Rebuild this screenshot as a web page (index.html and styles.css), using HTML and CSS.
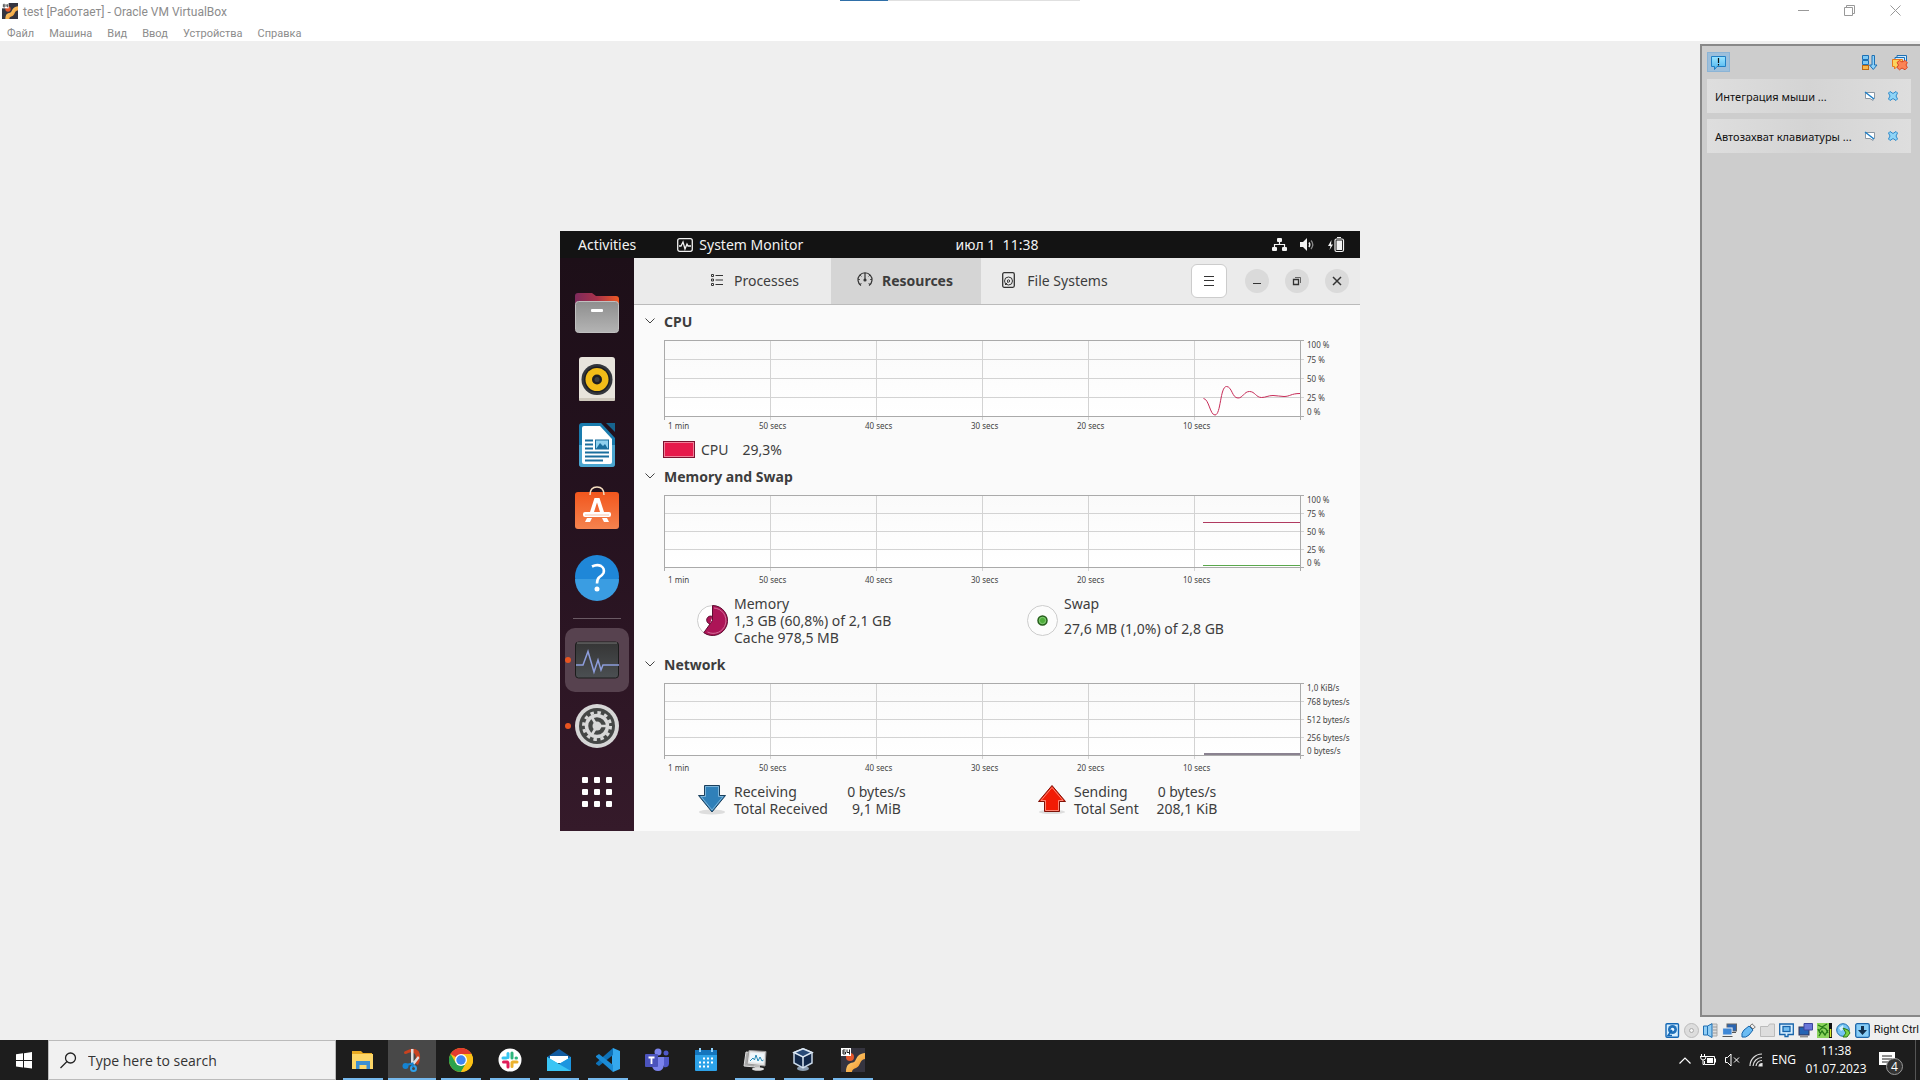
FILE: index.html
```html
<!DOCTYPE html>
<html lang="ru">
<head>
<meta charset="utf-8">
<title>test [Работает] - Oracle VM VirtualBox</title>
<link rel="stylesheet" href="styles.css">
</head>
<body>
<svg class="defs" aria-hidden="true">
  <defs>
    <linearGradient id="gBlue" x1="0" y1="0" x2="0" y2="1"><stop offset="0" stop-color="#9be4ff"/><stop offset="1" stop-color="#4db4ee"/></linearGradient>
    <linearGradient id="gFolder" x1="0" y1="0" x2="0" y2="1"><stop offset="0" stop-color="#8e8e8e"/><stop offset="1" stop-color="#b4b4b4"/></linearGradient>
    <linearGradient id="gTab" x1="0" y1="0" x2="1" y2="0"><stop offset="0" stop-color="#7d2a5c"/><stop offset=".5" stop-color="#a8324a"/><stop offset="1" stop-color="#ef5a24"/></linearGradient>
    <linearGradient id="gShop" x1="0" y1="0" x2="0" y2="1"><stop offset="0" stop-color="#f2561d"/><stop offset="1" stop-color="#f5834f"/></linearGradient>
    <linearGradient id="gMon" x1="0" y1="0" x2="0" y2="1"><stop offset="0" stop-color="#353535"/><stop offset="1" stop-color="#4b4f52"/></linearGradient>
    <linearGradient id="gPlot" x1="0" y1="0" x2="0" y2="1"><stop offset="0" stop-color="#fafafa"/><stop offset="1" stop-color="#ffffff"/></linearGradient>
    <linearGradient id="gGuest" x1="0" y1="0" x2="1" y2="1"><stop offset="0" stop-color="#ffe08a"/><stop offset="1" stop-color="#f08a1c"/></linearGradient>
    <symbol id="guest" viewBox="0 0 24 24">
      <rect width="24" height="24" fill="#35343f"/>
      <path d="M5 24C5 17 8 15 12 14.500C16 14 14 6 24 5V11C18 12 20 18 15 20C12 21 11 22 11 24Z" fill="url(#gGuest)"/>
      <circle cx="9" cy="9" r="4" fill="#e4562b"/>
      <rect width="10" height="8" fill="#fff"/>
      <path d="M4.500 2H2V6H4.500V4H2M6 1.500V4.500H9M8.500 1.500V6.500" fill="none" stroke="#222"/>
    </symbol>
    <symbol id="bubble-off" viewBox="0 0 12 12"><path d="M1.500 2.500H10.500V8.500H9V10.500L6 8.500H1.500Z" fill="#fff" stroke="#8b97a3"/><path d="M1 2L10 9" stroke="#1f80c8" stroke-width="1.500"/></symbol>
    <symbol id="cross" viewBox="0 0 12 12"><path d="M3 1.500L6 3.500L9 1.500L10.500 3L9 6L10.500 9L9 10.500L6 8.500L3 10.500L1.500 9L3 6L1.500 3Z" fill="#8ed4f7" stroke="#2f8aca"/></symbol>
  </defs>
</svg>

<header class="titlebar">
  <span class="load"></span>
  <svg class="app-icon"><use href="#guest"/></svg>
  <h1 class="title">test [Работает] - Oracle VM VirtualBox</h1>
  <div class="win-controls">
    <button aria-label="Свернуть"><svg width="11" height="11"><path d="M0 5.500H11" stroke="#999"/></svg></button>
    <button aria-label="Восстановить"><svg width="11" height="11" fill="none" stroke="#999"><path d="M.5 2.500H8.500V10.500H.5ZM2.500 2V.5H10.500V8.500H9"/></svg></button>
    <button aria-label="Закрыть"><svg width="11" height="11"><path d="M.5 .5L10.500 10.500M10.500 .5L.5 10.500" stroke="#999"/></svg></button>
  </div>
</header>
<nav class="menubar">
  <a href="#">Файл</a><a href="#">Машина</a><a href="#">Вид</a><a href="#">Ввод</a><a href="#">Устройства</a><a href="#">Справка</a>
</nav>

<main class="stage">
  <section class="guest" aria-label="Guest display">
    <div class="topbar">
      <span class="activities">Activities</span>
      <span class="focused"><svg width="16" height="14" fill="none" stroke="#f2f2f2" stroke-width="1.300"><rect x=".7" y=".7" width="14.600" height="12.600" rx="2"/><path d="M2 8H4L6 4L8 11L10 6L11 8H14"/></svg>System Monitor</span>
      <time class="clock">июл 1&nbsp; 11:38</time>
      <span class="indicators">
        <svg width="16" height="14" fill="#f2f2f2"><rect x="5" y="0" width="5" height="4" rx="1"/><rect x="0" y="9" width="5" height="4" rx="1"/><rect x="10" y="9" width="5" height="4" rx="1"/><path d="M2.500 9V6.500H12.500V9M7.500 4V6.500" fill="none" stroke="#f2f2f2" stroke-width="1.200"/></svg>
        <svg width="16" height="14"><path d="M0 4H3L7 0V13L3 9H0Z" fill="#f2f2f2"/><path d="M9 4.500Q10.500 6.500 9 9" fill="none" stroke="#f2f2f2" stroke-width="1.500"/><path d="M11 2.500Q14.500 6.500 11 11" fill="none" stroke="#888" stroke-width="1.300"/></svg>
        <svg width="17" height="16"><path d="M3.500 3L0 9H2.500L1.500 13L5 7.500H3Z" fill="#f2f2f2"/><path d="M9 .5H13" stroke="#f2f2f2"/><rect x="7" y="2" width="8.500" height="12.500" rx="1.500" fill="none" stroke="#f2f2f2" stroke-width="1.200"/><rect x="8.500" y="3.500" width="5.500" height="9.500" fill="#f2f2f2"/></svg>
      </span>
    </div>
    <div class="desktop">
      <nav class="dock">
        <button aria-label="Files"><svg viewBox="0 0 44 44"><path d="M0 12V5Q0 2 3 2H17L21 5H41Q44 5 44 8V14H0Z" fill="url(#gTab)"/><rect x=".5" y="10.500" width="43" height="31" rx="3" fill="url(#gFolder)" stroke="#c0c0c0"/><rect x="16" y="18" width="12" height="3" rx="1" fill="#fff"/></svg></button>
        <button aria-label="Rhythmbox"><svg viewBox="0 0 44 44"><rect x="4" y="0" width="36" height="44" rx="3" fill="#e8e4dc"/><rect x="4" y="41" width="36" height="3" rx="1" fill="#cfc9bd"/><circle cx="22" cy="22.500" r="15.500" fill="#33363c"/><circle cx="22" cy="22.500" r="13" fill="#1d1e22"/><circle cx="22" cy="22.500" r="11.500" fill="#f2bc18"/><circle cx="22" cy="22.500" r="5" fill="#1e1e20"/><circle cx="22" cy="22.500" r="2.500" fill="#3a3d42"/></svg></button>
        <button aria-label="LibreOffice Writer"><svg viewBox="0 0 44 44"><path d="M7 0H26L40 15V41Q40 44 37 44H7Q4 44 4 41V3Q4 0 7 0Z" fill="#1a7cae"/><path d="M4 22H40V41Q40 44 37 44H7Q4 44 4 41Z" fill="#4aa5cf"/><path d="M31 0H40V9Z" fill="#16638d"/><path d="M9 3H25L37 16V39Q37 41 35 41H9Q7 41 7 39V5Q7 3 9 3Z" fill="#fff"/><path d="M10 17.500H18M10 21.500H18M10 25.500H18M10 29.500H34M10 33.500H34M10 37.500H28" stroke="#1a6e9d" stroke-width="2"/><rect x="20.500" y="17" width="13" height="9" fill="#8fd0ee" stroke="#1a6e9d"/><path d="M21 26L25 20L28 23L30 21L33 26Z" fill="#1a6e9d"/></svg></button>
        <button aria-label="Ubuntu Software"><svg viewBox="0 0 44 44"><rect y="3" width="44" height="37" rx="3" fill="url(#gShop)"/><path d="M15 6Q15 -2 22 -2T29 6" fill="none" stroke="#f6dfc0" stroke-width="1.500"/><path d="M19.500 9H24.500L29 23H25L22 13.500L19 23H15Z" fill="#fff"/><rect x="8" y="23" width="28" height="5" rx="2" fill="#fff"/><path d="M10 26H34" stroke="#f3aa85" stroke-width=".7"/><path d="M12 29H17L15 33H10ZM27 29H32L34 33H29Z" fill="#fff"/></svg></button>
        <button aria-label="Help"><svg viewBox="0 0 44 44"><circle cx="22" cy="22" r="22" fill="#1f87d8"/><path d="M0 24H44A22 22 0 0 1 0 24Z" fill="#3a9de2"/><path d="M17 11.500Q22 9 26 11Q30 13.500 28.500 18Q27.500 20 24.500 22Q22 24 22 28.500" fill="none" stroke="#fff" stroke-width="2.600"/><circle cx="22" cy="34" r="2.500" fill="#fff"/></svg></button>
        <hr>
        <button class="active running" aria-label="System Monitor"><svg viewBox="0 0 44 44"><rect x=".5" y="4" width="43" height="36" rx="3" fill="url(#gMon)" stroke="#1c1c1c"/><path d="M2 5H42" stroke="#777"/><path d="M1 27H8L13 13.500L19 34L23 22L26 32L28 27H44" fill="none" stroke="#8d9ddb" stroke-width="1.500"/></svg></button>
        <button class="running" aria-label="Settings"><svg viewBox="0 0 44 44"><circle cx="22" cy="22" r="22" fill="#d6d6d6"/><circle cx="22" cy="22" r="18" fill="#454746"/><circle cx="22" cy="22" r="13.500" fill="none" stroke="#d8d8d8" stroke-width="3" stroke-dasharray="3.500 3.568"/><circle cx="22" cy="22" r="10.500" fill="none" stroke="#d8d8d8" stroke-width="3.500"/><circle cx="22" cy="22" r="4.500" fill="#d8d8d8"/><path d="M22 22H32M22 22L17 13.500M22 22L17 30.500" stroke="#d8d8d8" stroke-width="2.500"/></svg></button>
        <button aria-label="Show Applications"><svg viewBox="0 0 44 44" fill="#fff"><g id="dots"><rect x="7" y="7" width="6" height="6" rx="1"/><rect x="19" y="7" width="6" height="6" rx="1"/><rect x="31" y="7" width="6" height="6" rx="1"/></g><use href="#dots" y="12"/><use href="#dots" y="24"/></svg></button>
      </nav>

      <div class="monitor">
        <div class="headerbar">
          <div class="tabs">
            <button class="tab"><svg width="12" height="12" fill="none" stroke="#333"><path d="M4.500 1.500H12M4.500 6H12M4.500 10.500H12"/><path d="M.5 .5H2.500V2.500H.5ZM.5 5H2.500V7H.5ZM.5 9.500H2.500V11.500H.5Z"/></svg>Processes</button>
            <button class="tab selected"><svg width="16" height="16" fill="none" stroke="#333" stroke-width="1.200"><path d="M4 13.500A7 7 0 1 1 12 13.500M8 1V8"/><circle cx="8" cy="8" r="1" fill="#333"/><path d="M1 7.500H3M13 7.500H15M3 3L4.500 4.500M13 3L11.500 4.500M3 12.500L4.500 11M13 12.500L11.500 11" stroke-width=".8"/></svg>Resources</button>
            <button class="tab"><svg width="14" height="16" fill="none" stroke="#333" stroke-width="1.300"><rect x=".7" y=".7" width="11.600" height="14.600" rx="1.500"/><circle cx="6.500" cy="9" r="4" stroke-width="1"/><circle cx="6.500" cy="9" r="1.200" stroke-width="1"/><path d="M5.500 10.500L3 13" stroke-width="1"/></svg>File Systems</button>
          </div>
          <button class="hamburger" aria-label="Menu"><svg width="10" height="10"><path d="M0 .5H10M0 4.500H10M0 9.500H10" stroke="#333"/></svg></button>
          <button class="round" aria-label="Minimize"><svg width="10" height="10"><path d="M1 7.500H9" stroke="#333"/></svg></button>
          <button class="round" aria-label="Restore"><svg width="10" height="10" fill="none" stroke="#333"><path d="M1.500 3.500H6.500V8.500H1.500Z" stroke-width="1.300"/><path d="M3 1.500H8.500V7" stroke-width=".7"/></svg></button>
          <button class="round" aria-label="Close"><svg width="10" height="10"><path d="M1 1L9 9M9 1L1 9" stroke="#333" stroke-width="1.500"/></svg></button>
        </div>

        <section class="resource">
          <h2><svg class="chevron" viewBox="0 0 10 6"><path d="M.5 .5L5 5L9.500 .5"/></svg>CPU</h2>
          <svg class="chart" viewBox="0 0 696 101" preserveAspectRatio="xMinYMin meet">
            <rect x="0" y="6" width="636" height="76" fill="url(#gPlot)"/>
            <path class="grid" d="M0 25.500H640M0 44.500H640M0 63.500H640M106.500 6V86M212.500 6V86M318.500 6V86M424.500 6V86M530.500 6V86"/>
            <path class="frame" d="M0 6.500H640M0 82.500H640M.5 6V86M636.500 6V86"/>
            <path class="line cpu" d="M539.500 64.500C545 65 546 81 551 81C557 81 556 52.500 562.500 52.500C568 52.500 568 64 574 64C579 64 580 57.500 585.500 57.500C591 57.500 592 63.500 597.500 63.500C602 63.500 604 61.500 609 61.500C613 61.500 616 62.500 620 62.500C626 62.500 627 59.500 636 59.500"/>
            <g class="ticks"><text x="4" y="95">1 min</text><text x="95" y="95">50 secs</text><text x="201" y="95">40 secs</text><text x="307" y="95">30 secs</text><text x="413" y="95">20 secs</text><text x="519" y="95">10 secs</text>
            <text x="643" y="14">100 %</text><text x="643" y="29">75 %</text><text x="643" y="48">50 %</text><text x="643" y="67">25 %</text><text x="643" y="81">0 %</text></g>
          </svg>
          <div class="legend cpu-legend"><button class="swatch" aria-label="CPU color"></button><span>CPU</span><span class="value">29,3%</span></div>
        </section>

        <section class="resource">
          <h2><svg class="chevron" viewBox="0 0 10 6"><path d="M.5 .5L5 5L9.500 .5"/></svg>Memory and Swap</h2>
          <svg class="chart" viewBox="0 0 696 101" preserveAspectRatio="xMinYMin meet">
            <rect x="0" y="6" width="636" height="72" fill="url(#gPlot)"/>
            <path class="grid" d="M0 24.500H640M0 42.500H640M0 60.500H640M106.500 6V82M212.500 6V82M318.500 6V82M424.500 6V82M530.500 6V82"/>
            <path class="frame" d="M0 6.500H640M0 78.500H640M.5 6V82M636.500 6V82"/>
            <path class="line mem" d="M539 33.500H636"/><path class="line swap" d="M539 76.500H636"/>
            <g class="ticks"><text x="4" y="94">1 min</text><text x="95" y="94">50 secs</text><text x="201" y="94">40 secs</text><text x="307" y="94">30 secs</text><text x="413" y="94">20 secs</text><text x="519" y="94">10 secs</text>
            <text x="643" y="14">100 %</text><text x="643" y="28">75 %</text><text x="643" y="46">50 %</text><text x="643" y="64">25 %</text><text x="643" y="77">0 %</text></g>
          </svg>
          <div class="legend mem-legend">
            <svg class="pie" viewBox="0 0 31 31"><circle cx="15.500" cy="15.500" r="15" fill="#fff" stroke="#ccc"/><path d="M15.500 .5A15 15 0 1 1 6.800 27.700L15.500 15.500Z" fill="#ad1457" stroke="#5f0c31"/><path d="M17 3A12.700 12.700 0 1 1 10.500 27" fill="none" stroke="#d987a9" stroke-width=".8"/><path d="M15.500 11.500A4 4 0 1 0 13 19" fill="#ad1457" stroke="#5f0c31"/></svg>
            <p>Memory<br>1,3 GB (60,8%) of 2,1 GB<br>Cache 978,5 MB</p>
            <svg class="pie" viewBox="0 0 31 31"><circle cx="15.500" cy="15.500" r="15" fill="#fcfcfc" stroke="#ccc"/><circle cx="15.500" cy="15.500" r="4.500" fill="#4fae3b" stroke="#255c1b" stroke-width="1.500"/><circle cx="15.500" cy="15.500" r="3.200" fill="none" stroke="#9bd48f" stroke-width=".7"/></svg>
            <p class="swap-text"><span>Swap</span><span>27,6 MB (1,0%) of 2,8 GB</span></p>
          </div>
        </section>

        <section class="resource">
          <h2><svg class="chevron" viewBox="0 0 10 6"><path d="M.5 .5L5 5L9.500 .5"/></svg>Network</h2>
          <svg class="chart" viewBox="0 0 696 101" preserveAspectRatio="xMinYMin meet">
            <rect x="0" y="6" width="636" height="72" fill="url(#gPlot)"/>
            <path class="grid" d="M0 24.500H640M0 42.500H640M0 60.500H640M106.500 6V82M212.500 6V82M318.500 6V82M424.500 6V82M530.500 6V82"/>
            <path class="frame" d="M0 6.500H640M0 78.500H640M.5 6V82M636.500 6V82"/>
            <path class="line net" d="M540 77H636"/>
            <g class="ticks"><text x="4" y="94">1 min</text><text x="95" y="94">50 secs</text><text x="201" y="94">40 secs</text><text x="307" y="94">30 secs</text><text x="413" y="94">20 secs</text><text x="519" y="94">10 secs</text>
            <text x="643" y="14">1,0 KiB/s</text><text x="643" y="28">768 bytes/s</text><text x="643" y="46">512 bytes/s</text><text x="643" y="64">256 bytes/s</text><text x="643" y="77">0 bytes/s</text></g>
          </svg>
          <div class="legend net-legend">
            <svg class="arrow" viewBox="0 0 28 30"><ellipse cx="14" cy="27" rx="13" ry="2.500" fill="#ddd"/><path d="M6.500 .5H21.500V10.500H27.500L14 27L.5 10.500H6.500Z" fill="#2f80b9" stroke="#1b3f5c"/><path d="M7.500 1.500H20.500V11.500H25L14 25L3 11.500H7.500Z" fill="none" stroke="#8fc0e0" stroke-width=".8"/></svg>
            <p>Receiving<br>Total Received</p><p class="amount">0 bytes/s<br>9,1 MiB</p>
            <svg class="arrow" viewBox="0 0 28 30"><ellipse cx="14" cy="27" rx="13" ry="2" fill="#ddd"/><path d="M14 .5L27.500 16.500H21.500V26.500H6.500V16.500H.5Z" fill="#f21b05" stroke="#7d1208"/><path d="M14 2.500L25 15.500H20.500V25.500H7.500V15.500H3Z" fill="none" stroke="#ff9f8f" stroke-width=".8"/></svg>
            <p>Sending<br>Total Sent</p><p class="amount">0 bytes/s<br>208,1 KiB</p>
          </div>
        </section>
      </div>
    </div>
  </section>

  <aside class="notices">
    <div class="notice-tools">
      <button class="pressed" aria-label="Уведомления"><svg width="17" height="17"><path d="M1.500 2.500H15.500V12.500H7L4.500 15.500V12.500H1.500Z" fill="url(#gBlue)" stroke="#1f7fc4"/><path d="M8.500 4V9M8.500 10V11.500" stroke="#111" stroke-width="1.200"/></svg></button>
      <button aria-label="Сортировать"><svg width="17" height="17"><path d="M1.500 1.500H7.500V5.500H1.500ZM1.500 6.500H7.500V10.500H1.500Z" fill="#7cc9f6" stroke="#1d70b4"/><rect x="1.500" y="11.500" width="6" height="4" fill="#f8b84e" stroke="#c06a12"/><path d="M11 1.500H13.500V11H16L12.250 15.500L8.500 11H11Z" fill="#8fd3fa" stroke="#1d70b4"/></svg></button>
      <button aria-label="Закрыть все"><svg width="17" height="17"><path d="M6 4V1.500H15.500V7M4 6V3.500H13.500V8" fill="#cfeaff" stroke="#1d70b4"/><path d="M1.500 5.500H11.500V12.500H6L3.500 15V12.500H1.500Z" fill="#fbd35d" stroke="#e8781a"/><path d="M8.500 6.500L11 8L14 6.500L16.300 8.500L15 11L16.300 13.500L14 15.800L11 14L8.500 15.800L6 13.500L7.500 11L6 8.500Z" fill="#fb8455" stroke="#d94521"/></svg></button>
    </div>
    <article class="notice"><span>Интеграция мыши ...</span><button aria-label="Не показывать"><svg width="12" height="12"><use href="#bubble-off"/></svg></button><button aria-label="Закрыть"><svg width="12" height="12"><use href="#cross"/></svg></button></article>
    <article class="notice"><span>Автозахват клавиатуры ...</span><button aria-label="Не показывать"><svg width="12" height="12"><use href="#bubble-off"/></svg></button><button aria-label="Закрыть"><svg width="12" height="12"><use href="#cross"/></svg></button></article>
  </aside>
</main>

<footer class="status">
  <svg viewBox="0 0 15 15"><rect x="1" y=".7" width="12.500" height="13.500" rx="1" fill="#d6efff" stroke="#1367b5" stroke-width="1.400"/><circle cx="7.500" cy="6.500" r="4.500" fill="#2272bb"/><circle cx="7.500" cy="6.500" r="1.800" fill="#e8f5ff"/><path d="M7 7L3 12.500H7" fill="none" stroke="#1367b5" stroke-width="1.500"/></svg>
  <svg viewBox="0 0 15 15"><circle cx="7.500" cy="7.500" r="7" fill="#ddd" stroke="#bbb"/><circle cx="7.500" cy="7.500" r="2" fill="#f5f5f5" stroke="#aaa"/></svg>
  <svg viewBox="0 0 15 15"><path d="M8 1H14V13H8Z" fill="#ddd" stroke="#aaa"/><path d="M10 4H14M10 7H14M10 10H14" stroke="#999"/><path d="M.5 3H4.500L9 .7V14.500L4.500 12H.5Z" fill="#8fcdf5" stroke="#1f6fb3"/><path d="M4.500 3V12" stroke="#1f6fb3"/></svg>
  <svg viewBox="0 0 15 15"><rect x="5" y="1" width="9.500" height="7" fill="#2b65b1" stroke="#666"/><rect x=".6" y="5" width="9.500" height="7" fill="#3f88d6" stroke="#eee"/><path d="M.5 13.500H10.500M10 9.500H14" stroke="#555"/></svg>
  <svg viewBox="0 0 15 15"><path d="M1 14Q0 10 3 7L8 3L12 7L8 12Q5 15 1 14Z" fill="#6bbcf3" stroke="#1864aa"/><path d="M9 3L11 .8L14.300 4L12 6Z" fill="#eee" stroke="#777"/></svg>
  <svg viewBox="0 0 15 15"><path d="M.5 13.500V3.500H8L9.500 1H14.500V13.500Z" fill="#ddd" stroke="#bbb"/></svg>
  <svg viewBox="0 0 15 15"><path d="M.7 1H14.300V11.500H9V13.500H6V11.500H.7Z" fill="#d9efff" stroke="#1864aa" stroke-width="1.300"/><rect x="4" y="3.500" width="7" height="5" fill="#74bdf0" stroke="#1864aa" stroke-width="1.300"/></svg>
  <svg viewBox="0 0 15 15"><rect x="1" y="4" width="10" height="8" fill="#2463b4" stroke="#335"/><path d="M2 13.800H10" stroke="#666"/><path d="M6 .5H14.500V7H6Z" fill="#6875d8" stroke="#3d459c"/></svg>
  <svg viewBox="0 0 15 15"><rect width="15" height="15" fill="#8bd35c"/><path d="M1 2L5 4L10 1M2 13L5 8L8 12L11 7M2 8Q5 3 9 6L11 10M1 6L3 10" stroke="#237a15" fill="none" stroke-width="1.300"/><rect x="12" y="0" width="3" height="15" fill="#111"/><path d="M13.500 6V14" stroke="#d8ed2d" stroke-width="1.500"/></svg>
  <svg viewBox="0 0 15 15"><circle cx="7" cy="7" r="6.300" fill="#76c4f3" stroke="#1b6cae"/><path d="M3 5L7 2L8 6L5 8Z" fill="#d7f1ff"/><path d="M7 5L12 7L14 10L11 14H7L10 10Z" fill="#7bd245" stroke="#2c7a16"/></svg>
  <svg viewBox="0 0 15 15"><rect x=".7" y=".7" width="13.600" height="13.600" rx="1.500" fill="#87cdf7" stroke="#1c65a9" stroke-width="1.300"/><path d="M6 3H9V7H12L7.500 12L3 7H6Z" fill="#12304e"/></svg>
  <span>Right Ctrl</span>
</footer>

<footer class="taskbar">
  <button class="start" aria-label="Start"><svg width="17" height="17" fill="#fff"><path d="M0 2.300L7 1.300V8H0ZM8 1.200L16 0V8H8ZM0 9H7V15.500L0 14.500ZM8 9H16V16.500L8 15.500Z"/></svg></button>
  <label class="search"><svg width="17" height="17" fill="none" stroke="#222" stroke-width="1.300"><circle cx="10.500" cy="6" r="5"/><path d="M7 9.500L.5 16"/></svg><input type="text" placeholder="Type here to search" aria-label="Search"></label>
  <nav class="apps">
    <button class="open" aria-label="File Explorer"><svg viewBox="0 0 24 24"><path d="M1 3H10L12 5H21V21H1Z" fill="#e9aa22"/><path d="M1 6H22V21H1Z" fill="#fdd667"/><path d="M5 21V13H19V21H15.500V17H8.500V21Z" fill="#3c8fd2"/></svg></button>
    <button class="open current" aria-label="Snip"><svg viewBox="0 0 24 24"><path d="M8 2Q14 -1 18.500 3Q22 9 18 17L14.500 15Q17 10 15 6Q12 2.500 6 6Q3 6 4.500 3.500Z" fill="#c9421f"/><path d="M11 1L13.500 1V16H11ZM13 14L18 8L19.500 10L14 17Z" fill="#dcdfe2"/><circle cx="5.500" cy="18" r="3" fill="#1583d1"/><circle cx="13.500" cy="20.500" r="2.500" fill="none" stroke="#2fa0ea" stroke-width="2"/><path d="M6 17L12.500 15.500L13 19" fill="none" stroke="#1583d1" stroke-width="2"/></svg></button>
    <button class="open" aria-label="Chrome"><svg viewBox="0 0 24 24"><circle cx="12" cy="12" r="12" fill="#fbc116"/><path d="M12 12L1.600 6A12 12 0 0 1 22.400 6Z" fill="#e33b2e"/><path d="M1.600 6A12 12 0 0 0 12 24L17.200 15L12 12L6.800 15Z" fill="#2ba24c"/><path d="M12 6H22.400A12 12 0 0 1 12 24L17.200 15Z" fill="#fbc116"/><circle cx="12" cy="12" r="6" fill="#fff"/><circle cx="12" cy="12" r="4.700" fill="#4086f4"/></svg></button>
    <button class="open" aria-label="Slack"><svg viewBox="0 0 24 24"><circle cx="12" cy="12" r="11.500" fill="#fff"/><g fill="none" stroke-width="3" stroke-linecap="round"><path d="M10 5.500V9.500M5 10H8" stroke="#36c5f0"/><path d="M14 5V10M18 10H18.500" stroke="#2eb67d"/><path d="M14 14.500V18.500M14.500 14H19" stroke="#ecb22e"/><path d="M5.500 14H9.500M10 15V19" stroke="#e01e5a"/></g></svg></button>
    <button class="open" aria-label="Mail"><svg viewBox="0 0 24 24"><path d="M0 9L12 1L24 9V12H0Z" fill="#125b9f"/><path d="M3 8H21V15H3Z" fill="#fff"/><path d="M0 9L12 16L24 9V23H0Z" fill="#33bdf2"/><path d="M0 9L24 23H0Z" fill="#3ac5f4"/><path d="M12 16L24 9V23Z" fill="#1c95df"/></svg></button>
    <button class="open" aria-label="Visual Studio Code"><svg viewBox="0 0 24 24"><path d="M17 0L24 3V21L17 24L16 20V4Z" fill="#34a8ee"/><path d="M17 0V7L3 18L0 16V15Z" fill="#0e72b8"/><path d="M17 24V17L3 6L0 8V9Z" fill="#1b8bd5"/></svg></button>
    <button aria-label="Teams"><svg viewBox="0 0 24 24"><circle cx="13" cy="4" r="3.500" fill="#7b83eb"/><circle cx="21" cy="5" r="2.500" fill="#5059c9"/><path d="M17 9H24V16Q23 20 19 19Z" fill="#5059c9"/><path d="M7 9H19V17Q18 23 13 23Q8 23 7 18Z" fill="#7b83eb"/><rect x="0" y="6" width="13" height="13" rx="1" fill="#4b53bc"/><path d="M3.500 9.500H9.500M6.500 9.500V16" stroke="#fff" stroke-width="1.800"/></svg></button>
    <button aria-label="Calendar"><svg viewBox="0 0 24 24"><rect x="1" y="2" width="22" height="21" rx="1" fill="#2da2e8"/><path d="M1 2H23V7H1Z" fill="#1475bd"/><path d="M6 0V4M18 0V4" stroke="#8fd3ff" stroke-width="2"/><path d="M9 10.500H20M5 14.500H20M5 18.500H16" stroke="#fff" stroke-width="2" stroke-dasharray="2 2"/></svg></button>
    <button class="open" aria-label="Task Manager"><svg viewBox="0 0 24 24"><path d="M3 4L1 18L12 19V5Z" fill="#aaa" stroke="#ddd"/><path d="M6 2.500L23 3.500L22 18L4 16Z" fill="#e2e2e2" stroke="#999"/><path d="M7.500 4.500L21 5.500L20.500 15.500L6 14Z" fill="#eef7fb"/><path d="M7 13L10 10L11.500 12L13 7L15 13L17 9L19 13L20.500 12" fill="none" stroke="#2689b5"/><path d="M12 17H17V20H12Z" fill="#bbb"/><ellipse cx="15" cy="21" rx="6" ry="1.800" fill="#ddd"/></svg></button>
    <button class="open" aria-label="VirtualBox"><svg viewBox="0 0 24 24"><ellipse cx="11" cy="20.500" rx="6" ry="2.500" fill="#8b9db0"/><path d="M11 .8L20 4.500V15L11 20L2 15V4.500Z" fill="#13294a" stroke="#c9d8e8" stroke-width="1.500"/><path d="M2 4.500L11 9L20 4.500L11 .8Z" fill="#294b78" stroke="#dce8f4" stroke-width="1.500"/><path d="M11 9V20" stroke="#dce8f4" stroke-width="1.500"/></svg></button>
    <button class="open" aria-label="test"><svg viewBox="0 0 24 24"><use href="#guest" width="24" height="24"/></svg></button>
  </nav>
  <div class="tray">
    <svg width="12" height="7"><path d="M.5 6.500L6 1L11.500 6.500" fill="none" stroke="#fff" stroke-width="1.200"/></svg>
    <svg width="16" height="12" fill="none" stroke="#fff"><path d="M6 2.500H14.500V10.500H4.500V7M15.500 4.500V8.500M1.500 0V2M4.500 0V2M0 2.500H6Q6 6 3 6Q.5 6 .5 2.500M3 6V10.500H4"/><rect x="7" y="4" width="6" height="5" fill="#fff" stroke="none"/></svg>
    <svg width="15" height="14" fill="none" stroke="#fff"><path d="M.5 4.500V9.500H2.500L6 13V1L2.500 4.500ZM9 4.500L14 9.500M14 4.500L9 9.500"/></svg>
    <svg width="14" height="14" fill="none" stroke="#ddd" stroke-width="1.200"><path d="M1 13A12 12 0 0 1 13 1M4 13A9 9 0 0 1 13 4.500M7 13A6 6 0 0 1 13 7.500"/><path d="M10 13A3 3 0 0 1 13 10.500V13Z" fill="#fff"/></svg>
    <span class="lang">ENG</span>
    <time class="datetime">11:38<br>01.07.2023</time>
    <button class="center" aria-label="4 notifications"><svg width="16" height="16"><path d="M0 0H16V13H12L9 16V13H0Z" fill="#fff"/><path d="M3 4H13M3 7H13M3 10H10" stroke="#222"/></svg><span class="badge">4</span></button>
  </div>
</footer>
</body>
</html>
```
FILE: styles.css
```css
* { box-sizing: border-box; }
body {
  margin: 0;
  min-height: 100vh;
  display: flex;
  flex-direction: column;
  background: #efefef;
  font-family: "Noto Sans", sans-serif;
  color: #3d3d3d;
}
button { border: 0; padding: 0; margin: 0; background: none; font: inherit; color: inherit; display: flex; align-items: center; justify-content: center; }
svg { display: block; flex: none; }
h1, h2, p { margin: 0; font-weight: 400; }
a { color: inherit; text-decoration: none; }
.defs { position: absolute; width: 0; height: 0; }

/* Host window */
.titlebar { position: relative; display: flex; align-items: center; height: 22px; padding: 0 2px; background: #fff; color: #8c8c8c; }
.load { position: absolute; top: 0; left: 43.75%; width: 12.5%; height: 1px; background: linear-gradient(90deg, #2f6fa8 20%, #e0e0e0 20%); }
.app-icon { width: 16px; height: 16px; }
.title { margin-left: 5px; padding-top: 2px; font: 12px/18px Roboto, sans-serif; }
.win-controls { display: flex; align-self: flex-start; margin-left: auto; }
.win-controls button { width: 46px; height: 20px; }
.menubar { display: flex; gap: 15px; height: 19px; padding: 0 7px; background: #fff; color: #8c8c8c; font: 11px/24px Roboto, sans-serif; }

.stage { position: relative; flex: 1; display: flex; align-items: center; justify-content: center; }

/* Guest display */
.guest { width: 800px; max-width: 100%; background: #fafafa; font-size: 14px; line-height: 17px; }
.topbar { position: relative; display: flex; align-items: center; height: 27px; padding: 0 15px 0 18px; background: #131313; color: #f2f2f2; }
.focused { display: flex; align-items: center; gap: 6px; margin-left: 41px; }
.clock { position: absolute; left: 0; right: 0; padding-left: 74px; text-align: center; }
.indicators { display: flex; align-items: center; gap: 12px; margin-left: auto; }
.desktop { display: flex; }
.dock { width: 74px; padding: 23px 5px 7px; display: flex; flex-direction: column; gap: 2px; background: linear-gradient(#1d0f18, #25121f 45%, #351a2a); }
.dock button { position: relative; width: 64px; height: 64px; border-radius: 10px; }
.dock button > svg { width: 44px; height: 44px; overflow: visible; }
.dock hr { width: 48px; height: 1px; margin: 7px auto; border: 0; background: #6a5a64; }
.dock .active { background: #57424f; }
.running::before { content: ""; position: absolute; left: 0; top: 29px; width: 6px; height: 6px; border-radius: 50%; background: #e95420; }

/* System monitor window */
.monitor { flex: 1; min-width: 0; }
.headerbar { display: flex; align-items: center; height: 47px; padding: 0 11px 0 47px; background: #ebebeb; border-bottom: 1px solid #bbb; }
.tabs { display: flex; align-self: stretch; margin-right: auto; }
.tab { width: 150px; gap: 11px; padding: 0 2px 2px 0; }
.tab.selected { background: #d5d5d5; font-weight: 700; gap: 9px; }
.hamburger { width: 36px; height: 34px; margin-right: 6px; border: 1px solid #ccc; border-radius: 6px; background: #fff; }
.round { width: 24px; height: 24px; margin-left: 12px; border-radius: 50%; background: #dadada; }
.round + .round { margin-left: 16px; }
.resource h2 { display: flex; align-items: center; gap: 9px; height: 24px; padding: 0 0 2px 11px; font-size: 14px; font-weight: 700; }
.headerbar + .resource { padding-top: 5px; }
.chevron { width: 10px; height: 6px; fill: none; stroke: #444; }
.chart { width: calc(100% - 30px); height: 101px; margin-left: 30px; }
.grid { stroke: #d3d3d3; fill: none; }
.frame { stroke: #aaa; fill: none; }
.line { fill: none; stroke-width: 1; }
.cpu { stroke: #c72c58; }
.mem { stroke: #b03a60; }
.swap { stroke: #5aa84c; }
.net { stroke: #8a8290; stroke-width: 2; }
.ticks { font-size: 8px; fill: #444; }
.cpu-legend { display: flex; align-items: center; height: 30px; padding: 0 0 2px 29px; }
.swatch { width: 32px; height: 17px; margin-right: 6px; border: 1px solid #7a1230; background: #e6194b; box-shadow: inset 0 0 0 1px #ef8099; }
.value { margin-left: 14px; }
.mem-legend { display: grid; grid-template-columns: 31px 299px 31px 1fr; align-items: center; height: 63px; padding: 0 0 2px 63px; }
.mem-legend p { padding-left: 6px; }
.pie { width: 31px; height: 31px; }
.mem-legend .swap-text { display: grid; gap: 8px; align-self: start; padding-top: 5px; }
.net-legend { display: grid; grid-template-columns: 28px 114px 73px 125px 28px 83px 76px; align-items: start; height: 53px; padding: 5px 0 0 64px; }
.net-legend p { padding-left: 8px; white-space: nowrap; }
.net-legend .amount { padding: 0; text-align: center; }
.arrow { width: 28px; height: 30px; margin-top: 2px; }
.net-legend .arrow:nth-of-type(2) { grid-column: 5; }

/* Notification centre */
.notices { position: absolute; top: 3px; right: 0; bottom: 4px; width: 220px; padding: 6px 9px 0 5px; background: #cdcdcd; border: solid #888; border-width: 2px 0 2px 2px; display: flex; flex-direction: column; gap: 6px; font: 11px/14px "Noto Sans", sans-serif; color: #111; }
.notice-tools { display: flex; gap: 13px; height: 20px; padding-right: 3px; margin-bottom: 1px; }
.pressed { width: 23px; margin-right: auto; background: #9dbfdb; outline: 1px solid #8bb4d6; outline-offset: -1px; }
.notice { display: flex; align-items: center; height: 34px; padding: 0 12px 0 8px; gap: 11px; background: linear-gradient(90deg, #dedede, #d4d4d4 50%, #dedede); white-space: nowrap; }
.notice span { flex: 1; padding-top: 2px; }

/* Machine status bar */
.status { display: flex; justify-content: flex-end; align-items: center; gap: 4px; height: 19px; padding: 0 1px 1px 0; font: 11px/18px Roboto, sans-serif; color: #111; }
.status svg { width: 15px; height: 15px; }

/* Host taskbar */
.taskbar { display: flex; height: 40px; background: #1d1d1d; color: #fff; font: 12px/18px "Open Sans", sans-serif; }
.start { width: 48px; }
.search { display: flex; align-items: center; gap: 11px; width: 288px; padding-left: 11px; background: #f1f1f1; border: 1px solid #bbb; }
.search input { flex: 1; min-width: 0; border: 0; padding: 2px 0 0; background: none; font: 14px/20px "Open Sans", sans-serif; }
.search input::placeholder { color: #333; opacity: 1; }
.apps { display: flex; gap: 1px; margin-left: 3px; }
.apps button { position: relative; width: 48px; }
.apps svg { width: 24px; height: 24px; }
.open::after { content: ""; position: absolute; left: 4px; right: 4px; bottom: 0; height: 2px; background: #76b9ed; }
.current { background: #484848; }
.current::after { left: 0; right: 0; }
.tray { display: flex; align-items: center; gap: 9px; margin-left: auto; padding-right: 4px; }
.datetime { width: 62px; text-align: center; }
.center { position: relative; width: 48px; height: 40px; margin-left: -8px; padding-right: 10px; border-right: 1px solid #555; }
.badge { position: absolute; left: 18px; top: 18px; width: 17px; height: 17px; border: 1px solid #999; border-radius: 50%; background: #333; font-size: 12px; line-height: 15px; }
```
